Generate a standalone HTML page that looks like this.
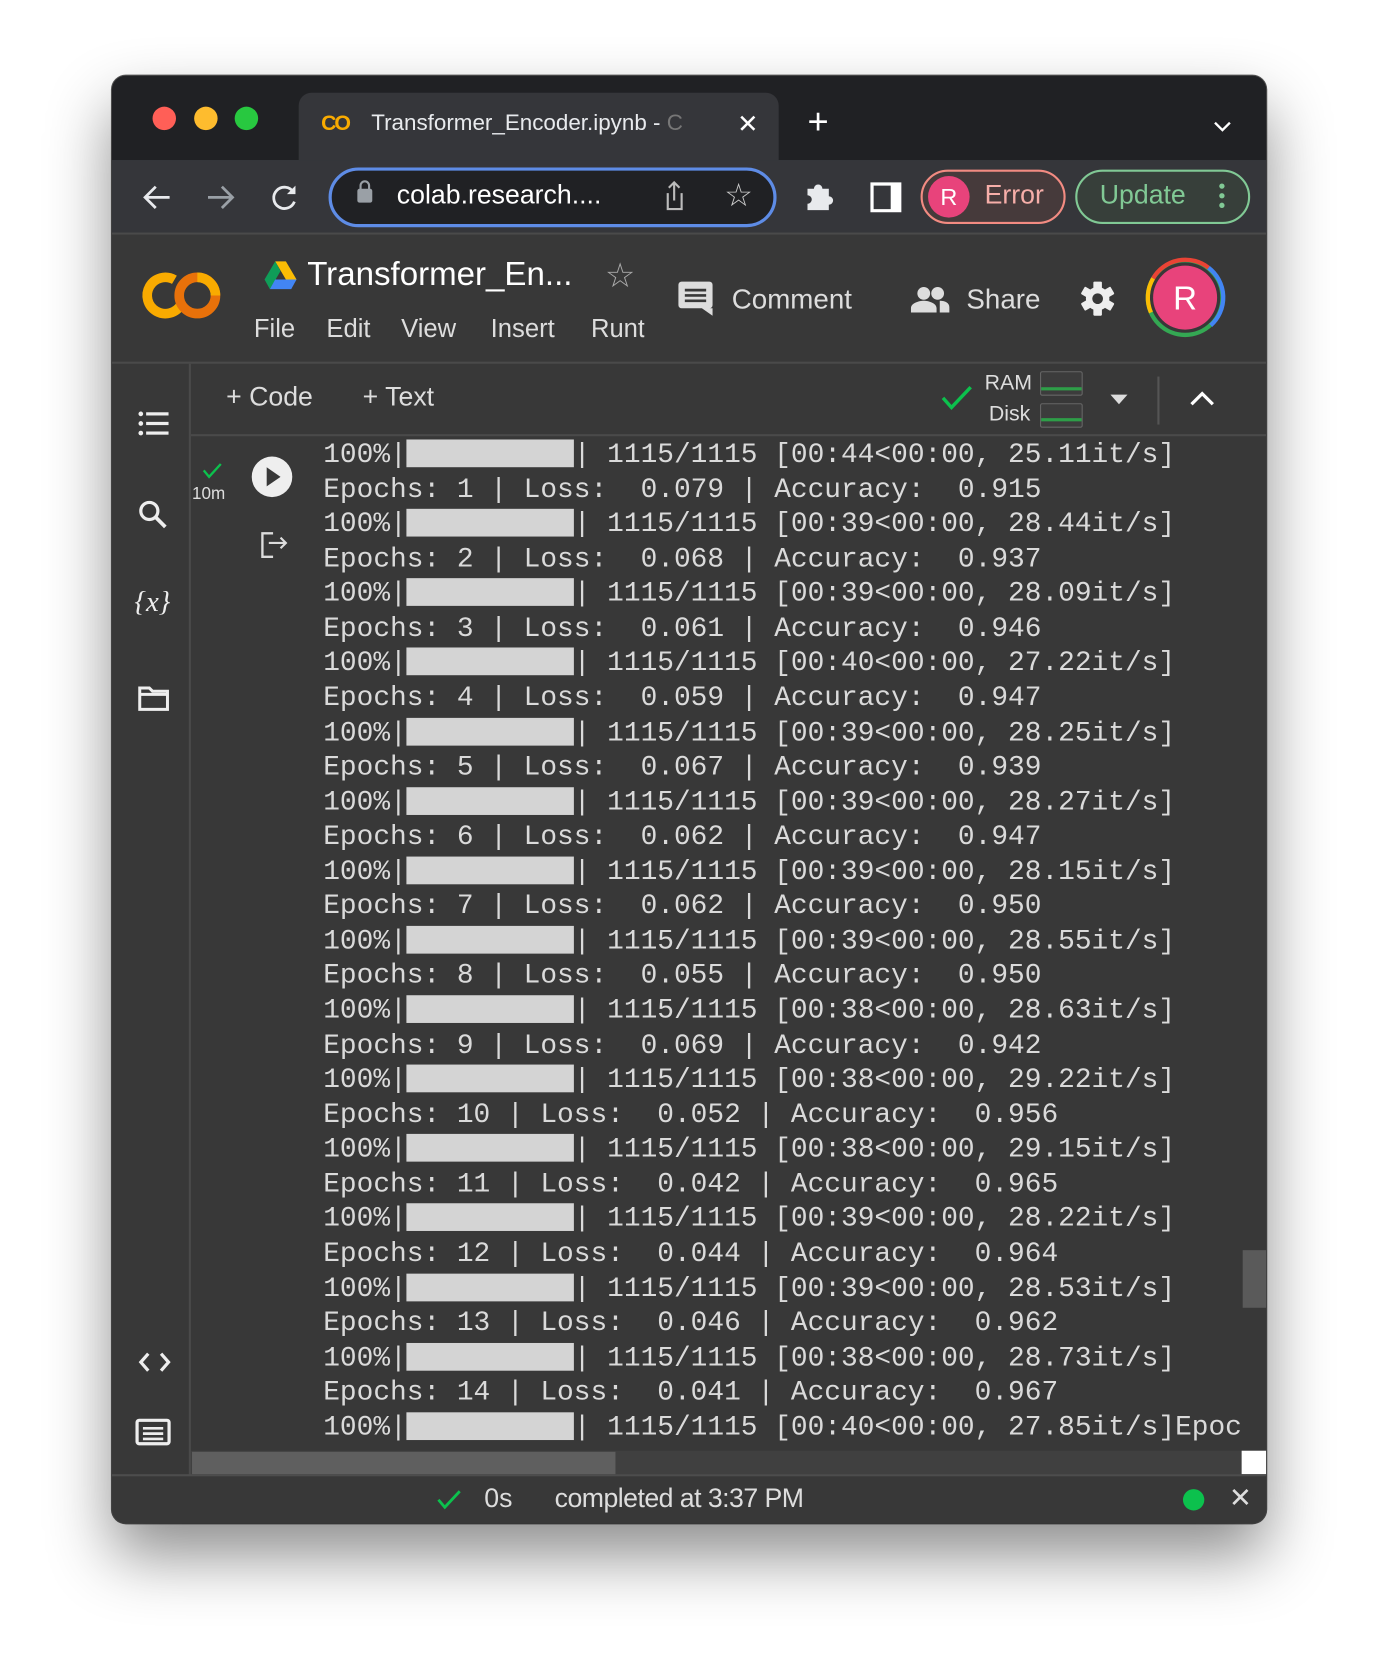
<!DOCTYPE html>
<html><head><meta charset="utf-8"><style>
html,body{margin:0;padding:0;background:#fff;width:1376px;height:1670px;overflow:hidden}
#s{position:absolute;left:0;top:0;width:1290px;height:1566px;transform:scale(1.0667);transform-origin:0 0;font-family:"Liberation Sans",sans-serif}
.a{position:absolute}
.win{left:105px;top:71px;width:1082px;height:1357px;border-radius:13px;background:#383838;overflow:hidden;box-shadow:0 30px 60px rgba(0,0,0,.45),0 0 0 1px #555}
.t{color:#e3e3e3;white-space:nowrap}
.mono{font-family:"Liberation Mono",monospace;font-size:26.1px;line-height:32.57px;color:#dadada;white-space:pre}
.bar{display:inline-block;width:10ch;height:26px;background:#d4d4d4;vertical-align:-5px}
svg{position:absolute;overflow:visible}
</style></head><body><div id="s">
<div class="a win">
 <!-- tab bar -->
 <div class="a" style="left:0;top:0;width:1082px;height:79px;background:#202124"></div>
 <div class="a" style="left:38px;top:29px;width:22px;height:22px;border-radius:50%;background:#ff5f57"></div>
 <div class="a" style="left:77px;top:29px;width:22px;height:22px;border-radius:50%;background:#febc2e"></div>
 <div class="a" style="left:115px;top:29px;width:22px;height:22px;border-radius:50%;background:#28c840"></div>
 <div class="a" style="left:175px;top:16px;width:450px;height:70px;background:#35363a;border-radius:12px 12px 0 0"></div>
 <div class="a t" style="left:196px;top:34px;font-size:20px;font-weight:bold;color:#f9ab00;letter-spacing:-2px">CO</div>
 <div class="a t" style="left:243px;top:33px;font-size:21px;color:#e8eaed">Transformer_Encoder.ipynb - <span style="color:#777">C</span></div>
 <div class="a t" style="left:586px;top:31px;font-size:24px;color:#fff">✕</div>
 <div class="a t" style="left:652px;top:24px;font-size:34px;color:#fff">+</div>
 <svg style="left:1032px;top:42px" width="18" height="12"><path d="M2 2l7 7 7-7" stroke="#fff" stroke-width="2.2" fill="none"/></svg>
 <!-- toolbar -->
 <div class="a" style="left:0;top:79px;width:1082px;height:68px;background:#35363a;border-bottom:2px solid #4a4a4a"></div>
 <svg style="left:28px;top:102px" width="28" height="24"><path d="M26 12H3M13 2L3 12l10 10" stroke="#e8eaed" stroke-width="2.6" fill="none"/></svg>
 <svg style="left:88px;top:102px" width="28" height="24"><path d="M2 12h23M15 2l10 10-10 10" stroke="#9aa0a6" stroke-width="2.6" fill="none"/></svg>
 <svg style="left:148px;top:100px" width="28" height="28"><path d="M22 9A10 10 0 1 0 23 18" stroke="#e8eaed" stroke-width="2.6" fill="none"/><path d="M24 3v8h-8z" fill="#e8eaed"/></svg>
 <div class="a" style="left:203px;top:86px;width:414px;height:50px;border:3px solid #5e8ce6;border-radius:28px;background:#202124"></div>
 <div class="a" style="left:230px;top:106px;width:14px;height:13px;background:#9aa0a6;border-radius:2px"></div>
 <div class="a" style="left:232px;top:98px;width:10px;height:12px;border:2px solid #9aa0a6;border-radius:6px 6px 0 0;box-sizing:border-box"></div>
 <div class="a t" style="left:267px;top:98px;font-size:25px;color:#fff">colab.research....</div>
 <svg style="left:517px;top:98px" width="20" height="30"><path d="M4 12v15h13V12M10 19V2M5 7l5-5 5 5" stroke="#bbb" stroke-width="2" fill="none"/></svg>
 <div class="a t" style="left:574px;top:95px;font-size:30px;color:#ccc">☆</div>
 <svg style="left:649px;top:99px" width="28" height="28"><path d="M3 7h6a4 4 0 0 1 8 0h6v7a4 4 0 0 1 0 8v5H3v-6a4 4 0 0 0 0-8z" fill="#e8eaed"/></svg>
 <div class="a" style="left:711px;top:100px;width:16px;height:22px;border:3px solid #fff;border-right-width:10px"></div>
 <div class="a" style="left:758px;top:88px;width:132px;height:47px;border:2px solid #f28b82;border-radius:26px;background:#463a3b"></div>
 <div class="a t" style="left:765px;top:94px;width:39px;height:39px;border-radius:50%;background:#e8437b;color:#fff;font-size:22px;text-align:center;line-height:39px">R</div>
 <div class="a t" style="left:818px;top:98px;font-size:25px;color:#f6aea9">Error</div>
 <div class="a" style="left:903px;top:88px;width:160px;height:47px;border:2px solid #81c995;border-radius:26px;background:#373f3a"></div>
 <div class="a t" style="left:926px;top:98px;font-size:25px;color:#81c995">Update</div>
 <div class="a" style="left:1038px;top:101px;width:5px;height:5px;border-radius:50%;background:#81c995;box-shadow:0 9px #81c995,0 18px #81c995"></div>
 <!-- colab header -->
 <div class="a" style="left:0;top:149px;width:1082px;height:119px;background:#383838;border-bottom:2px solid #4a4a4a"></div>
 <svg style="left:28px;top:182px" width="76" height="48"><circle cx="22" cy="24" r="17" stroke="#f9ab00" stroke-width="9" fill="none" stroke-dasharray="80 40" transform="rotate(30 22 24)"/><circle cx="52" cy="24" r="17" stroke="#e8710a" stroke-width="9" fill="none"/><path d="M52 7a17 17 0 0 1 17 17" stroke="#f9ab00" stroke-width="9" fill="none"/></svg>
 <svg style="left:143px;top:174px" width="30" height="26"><path d="M10 0h10l10 17H20z" fill="#fbbc04"/><path d="M10 0L0 17l5 9 10-17z" fill="#0f9d58"/><path d="M5 26h20l5-9H10z" fill="#4285f4"/></svg>
 <div class="a t" style="left:183px;top:168px;font-size:31px;color:#fff">Transformer_En...</div>
 <div class="a t" style="left:462px;top:168px;font-size:32px;color:#aaa">☆</div>
 <div class="a t" style="left:133px;top:224px;font-size:24px;color:#ddd;word-spacing:0">File</div>
 <div class="a t" style="left:201px;top:224px;font-size:24px;color:#ddd">Edit</div>
 <div class="a t" style="left:271px;top:224px;font-size:24px;color:#ddd">View</div>
 <div class="a t" style="left:355px;top:224px;font-size:24px;color:#ddd">Insert</div>
 <div class="a t" style="left:449px;top:224px;font-size:24px;color:#ddd;width:50px;overflow:hidden">Runtime</div>
 <svg style="left:531px;top:193px" width="32" height="32"><path d="M0 3a3 3 0 0 1 3-3h26a3 3 0 0 1 3 3v19a3 3 0 0 1-3 3H3a3 3 0 0 1-3-3z M22 25h10v7z" fill="#ddd"/><path d="M6 8h20M6 13h20M6 18h20" stroke="#383838" stroke-width="2.5"/></svg>
 <div class="a t" style="left:581px;top:194px;font-size:26px;color:#ddd">Comment</div>
 <svg style="left:749px;top:198px" width="36" height="24"><circle cx="12" cy="6" r="6" fill="#ddd"/><circle cx="25" cy="6" r="6" fill="#ddd"/><path d="M0 24v-4c0-5 8-7 12-7s12 2 12 7v4zM27 13c5 0 9 2 9 6v5h-9z" fill="#ddd"/></svg>
 <div class="a t" style="left:801px;top:194px;font-size:26px;color:#ddd">Share</div>
 <svg style="left:908px;top:193px" width="32" height="32" viewBox="-16 -16 32 32"><g fill="#eee"><circle r="11"/><rect x="-4" y="-16" width="8" height="32" rx="1"/><rect x="-4" y="-16" width="8" height="32" rx="1" transform="rotate(60)"/><rect x="-4" y="-16" width="8" height="32" rx="1" transform="rotate(-60)"/></g><circle r="5" fill="#383838"/></svg>
 <svg style="left:968px;top:170px" width="76" height="76"><circle cx="38" cy="38" r="35" stroke="#34a853" stroke-width="4" fill="none"/><path d="M8 20A35 35 0 0 1 60 10" stroke="#ea4335" stroke-width="4" fill="none"/><path d="M60 10A35 35 0 0 1 62 64" stroke="#4285f4" stroke-width="4" fill="none"/><path d="M6 52A35 35 0 0 1 8 20" stroke="#fbbc04" stroke-width="4" fill="none"/><circle cx="38" cy="38" r="30" fill="#e8437b"/><text x="38" y="49" font-size="31" fill="#fff" text-anchor="middle" font-family="Liberation Sans">R</text></svg>
 <!-- sidebar -->
 <div class="a" style="left:72px;top:270px;width:2px;height:1042px;background:#4a4a4a"></div>
 <svg style="left:24px;top:314px" width="30" height="24"><g fill="#eee"><circle cx="3" cy="3" r="2.2"/><circle cx="3" cy="12" r="2.2"/><circle cx="3" cy="21" r="2.2"/><rect x="8" y="1.5" width="21" height="3"/><rect x="8" y="10.5" width="21" height="3"/><rect x="8" y="19.5" width="21" height="3"/></g></svg>
 <svg style="left:25px;top:398px" width="28" height="28"><circle cx="10" cy="10" r="8" stroke="#eee" stroke-width="3" fill="none"/><path d="M16 16l9 9" stroke="#eee" stroke-width="3.5"/></svg>
 <div class="a t" style="left:21px;top:478px;font-size:27px;font-family:'Liberation Serif',serif;font-style:italic;color:#eee">{<i>x</i>}</div>
 <svg style="left:24px;top:572px" width="30" height="24"><path d="M2 2h9l3 3h14v17H2z" stroke="#eee" stroke-width="2.8" fill="none"/><path d="M2 8h26" stroke="#eee" stroke-width="2.8"/></svg>
 <svg style="left:25px;top:1196px" width="30" height="20"><path d="M9 2L2 10l7 8M21 2l7 8-7 8" stroke="#eee" stroke-width="3" fill="none"/></svg>
 <svg style="left:22px;top:1259px" width="33" height="25"><rect x="1.5" y="1.5" width="30" height="22" rx="2" stroke="#eee" stroke-width="3" fill="none"/><path d="M7 9h19M7 14h19M7 19h19" stroke="#eee" stroke-width="2.5"/></svg>
 <!-- cell toolbar -->
 <div class="a t" style="left:107px;top:287px;font-size:25px;color:#ddd">+ Code</div>
 <div class="a t" style="left:235px;top:287px;font-size:25px;color:#ddd">+ Text</div>
 <svg style="left:777px;top:290px" width="30" height="24"><path d="M2 12l8 9L28 2" stroke="#0cc14d" stroke-width="3.2" fill="none"/></svg>
 <div class="a t" style="left:818px;top:277px;font-size:20px;color:#ddd">RAM</div>
 <div class="a t" style="left:822px;top:306px;font-size:20px;color:#ddd">Disk</div>
 <div class="a" style="left:870px;top:277px;width:38px;height:21px;border:1.5px solid #666;border-radius:2px;background:#3c3c3c"></div>
 <div class="a" style="left:871px;top:292px;width:38px;height:3px;background:#2e9e48"></div>
 <div class="a" style="left:870px;top:307px;width:38px;height:21px;border:1.5px solid #666;border-radius:2px;background:#3c3c3c"></div>
 <div class="a" style="left:871px;top:321px;width:38px;height:3px;background:#2e9e48"></div>
 <svg style="left:936px;top:299px" width="16" height="9"><path d="M0 0h16L8 9z" fill="#ddd"/></svg>
 <div class="a" style="left:980px;top:282px;width:1.5px;height:45px;background:#555"></div>
 <svg style="left:1010px;top:296px" width="24" height="14"><path d="M2 12l10-10 10 10" stroke="#fff" stroke-width="3" fill="none"/></svg>
 <div class="a" style="left:74px;top:336px;width:1008px;height:2px;background:#4a4a4a"></div>
 <!-- cell gutter -->
 <svg style="left:84px;top:362px" width="20" height="16"><path d="M2 8l5 6L18 2" stroke="#0cc14d" stroke-width="2.2" fill="none"/></svg>
 <div class="a t" style="left:75px;top:384px;font-size:16px;color:#ddd">10m</div>
 <div class="a" style="left:131px;top:357px;width:38px;height:38px;border-radius:50%;background:#eee"></div>
 <svg style="left:145px;top:367px" width="14" height="18"><path d="M0 0l13 9L0 18z" fill="#383838"/></svg>
 <svg style="left:139px;top:426px" width="28" height="28"><path d="M12 3H2v22h10" stroke="#ddd" stroke-width="2.2" fill="none"/><path d="M8 12h16M19 7l5 5-5 5" stroke="#ddd" stroke-width="2" fill="none"/></svg>
 <!-- output -->
 <div class="a mono" style="left:198px;top:339px;width:862px;height:950px;overflow:hidden">100%|<span class="bar"></span>| 1115/1115 [00:44&lt;00:00, 25.11it/s]
Epochs: 1 | Loss:  0.079 | Accuracy:  0.915
100%|<span class="bar"></span>| 1115/1115 [00:39&lt;00:00, 28.44it/s]
Epochs: 2 | Loss:  0.068 | Accuracy:  0.937
100%|<span class="bar"></span>| 1115/1115 [00:39&lt;00:00, 28.09it/s]
Epochs: 3 | Loss:  0.061 | Accuracy:  0.946
100%|<span class="bar"></span>| 1115/1115 [00:40&lt;00:00, 27.22it/s]
Epochs: 4 | Loss:  0.059 | Accuracy:  0.947
100%|<span class="bar"></span>| 1115/1115 [00:39&lt;00:00, 28.25it/s]
Epochs: 5 | Loss:  0.067 | Accuracy:  0.939
100%|<span class="bar"></span>| 1115/1115 [00:39&lt;00:00, 28.27it/s]
Epochs: 6 | Loss:  0.062 | Accuracy:  0.947
100%|<span class="bar"></span>| 1115/1115 [00:39&lt;00:00, 28.15it/s]
Epochs: 7 | Loss:  0.062 | Accuracy:  0.950
100%|<span class="bar"></span>| 1115/1115 [00:39&lt;00:00, 28.55it/s]
Epochs: 8 | Loss:  0.055 | Accuracy:  0.950
100%|<span class="bar"></span>| 1115/1115 [00:38&lt;00:00, 28.63it/s]
Epochs: 9 | Loss:  0.069 | Accuracy:  0.942
100%|<span class="bar"></span>| 1115/1115 [00:38&lt;00:00, 29.22it/s]
Epochs: 10 | Loss:  0.052 | Accuracy:  0.956
100%|<span class="bar"></span>| 1115/1115 [00:38&lt;00:00, 29.15it/s]
Epochs: 11 | Loss:  0.042 | Accuracy:  0.965
100%|<span class="bar"></span>| 1115/1115 [00:39&lt;00:00, 28.22it/s]
Epochs: 12 | Loss:  0.044 | Accuracy:  0.964
100%|<span class="bar"></span>| 1115/1115 [00:39&lt;00:00, 28.53it/s]
Epochs: 13 | Loss:  0.046 | Accuracy:  0.962
100%|<span class="bar"></span>| 1115/1115 [00:38&lt;00:00, 28.73it/s]
Epochs: 14 | Loss:  0.041 | Accuracy:  0.967
100%|<span class="bar"></span>| 1115/1115 [00:40&lt;00:00, 27.85it/s]Epochs: 15</div>
 <div class="a" style="left:1060px;top:1101px;width:22px;height:54px;background:#5a5a5a"></div>
 <div class="a" style="left:74px;top:1289px;width:986px;height:22px;background:#404040"></div>
 <div class="a" style="left:75px;top:1290px;width:397px;height:21px;background:#5f5f5f"></div>
 <div class="a" style="left:1059px;top:1289px;width:23px;height:22px;background:#fff"></div>
 <!-- status -->
 <div class="a" style="left:0;top:1311px;width:1082px;height:2px;background:#4d4d4d"></div>
 <svg style="left:304px;top:1325px" width="24" height="20"><path d="M2 10l6 7L22 2" stroke="#0cc14d" stroke-width="2.6" fill="none"/></svg>
 <div class="a t" style="left:349px;top:1320px;font-size:25px;color:#ddd">0s</div>
 <div class="a t" style="left:415px;top:1320px;font-size:25px;color:#ddd;letter-spacing:-0.5px">completed at 3:37 PM</div>
 <div class="a" style="left:1004px;top:1325px;width:20px;height:20px;border-radius:50%;background:#0cc14d"></div>
 <div class="a t" style="left:1047px;top:1318px;font-size:26px;color:#ddd">✕</div>
</div>
</div></body></html>
